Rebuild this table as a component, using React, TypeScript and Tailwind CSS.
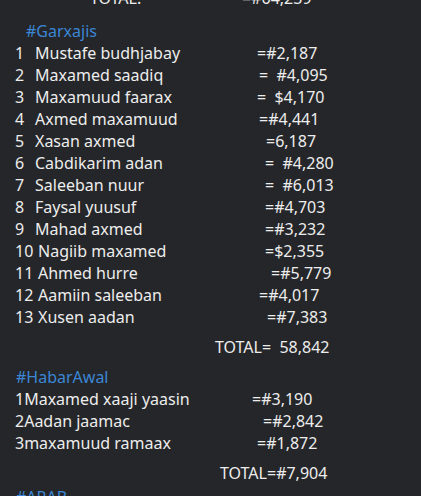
import React from "react";

type Row = { num: string; name: string; value: string; x: number };

const garxajis: Row[] = [
  { num: "1", name: "Mustafe budhjabay", value: "=#2,187", x: 257 },
  { num: "2", name: "Maxamed saadiq", value: "=  #4,095", x: 259 },
  { num: "3", name: "Maxamuud faarax", value: "=  $4,170", x: 257 },
  { num: "4", name: "Axmed maxamuud", value: "=#4,441", x: 259 },
  { num: "5", name: "Xasan axmed", value: "=6,187", x: 266 },
  { num: "6", name: "Cabdikarim adan", value: "=  #4,280", x: 265 },
  { num: "7", name: "Saleeban nuur", value: "=  #6,013", x: 265 },
  { num: "8", name: "Faysal yuusuf", value: "=#4,703", x: 265 },
  { num: "9", name: "Mahad axmed", value: "=#3,232", x: 265 },
  { num: "10", name: "Nagiib maxamed", value: "=$2,355", x: 265 },
  { num: "11", name: "Ahmed hurre", value: "=#5,779", x: 271 },
  { num: "12", name: "Aamiin saleeban", value: "=#4,017", x: 259 },
  { num: "13", name: "Xusen aadan", value: "=#7,383", x: 267 },
];

const habarAwal: Row[] = [
  { num: "1", name: "Maxamed xaaji yaasin", value: "=#3,190", x: 252 },
  { num: "2", name: "Aadan jaamac", value: "=#2,842", x: 263 },
  { num: "3", name: "maxamuud ramaax", value: "=#1,872", x: 257 },
];

const Line = ({ left, right, x }: { left: React.ReactNode; right: string; x: number }) => (
  <div className="flex h-[22px] items-center whitespace-pre">
    <div className="shrink-0" style={{ width: x }}>
      {left}
    </div>
    <div>{right}</div>
  </div>
);

export default function App() {
  return (
    <div
      className="h-[496px] w-[421px] overflow-hidden bg-[#252629] text-[16px] text-[#ededed]"
      style={{ fontFamily: '"Noto Sans", "Open Sans", sans-serif' }}
    >
      <div className="-mt-[13px] flex flex-col">
        <Line left={<span className="pl-[90px]">TOTAL:</span>} right="=#64,239" x={242} />

        <div className="mt-[11px] h-[22px] pl-[26px] leading-[22px] text-[#3b87d6]">#Garxajis</div>
        {garxajis.map(r => (
          <Line
            key={r.num}
            x={r.x}
            left={
              <div className="flex pl-[15px]">
                {r.num.length === 1 ? (
                  <span className="w-[20px]">{r.num}</span>
                ) : (
                  <span className="w-[23px]">{r.num}</span>
                )}
                <span>{r.name}</span>
              </div>
            }
            right={r.value}
          />
        ))}

        <div className="mt-[8px]">
          <Line left="" right="TOTAL=  58,842" x={215} />
        </div>

        <div className="mt-[8px] h-[22px] pl-[16px] leading-[22px] text-[#3b87d6]">#HabarAwal</div>
        {habarAwal.map(r => (
          <Line key={r.num} x={r.x} left={<span className="pl-[15px]">{r.num + r.name}</span>} right={r.value} />
        ))}

        <div className="mt-[8px]">
          <Line left="" right="TOTAL=#7,904" x={220} />
        </div>

        <div className="mt-[2px] h-[22px] pl-[16px] leading-[22px] text-[#3b87d6]">#ARAB</div>
      </div>
    </div>
  );
}
